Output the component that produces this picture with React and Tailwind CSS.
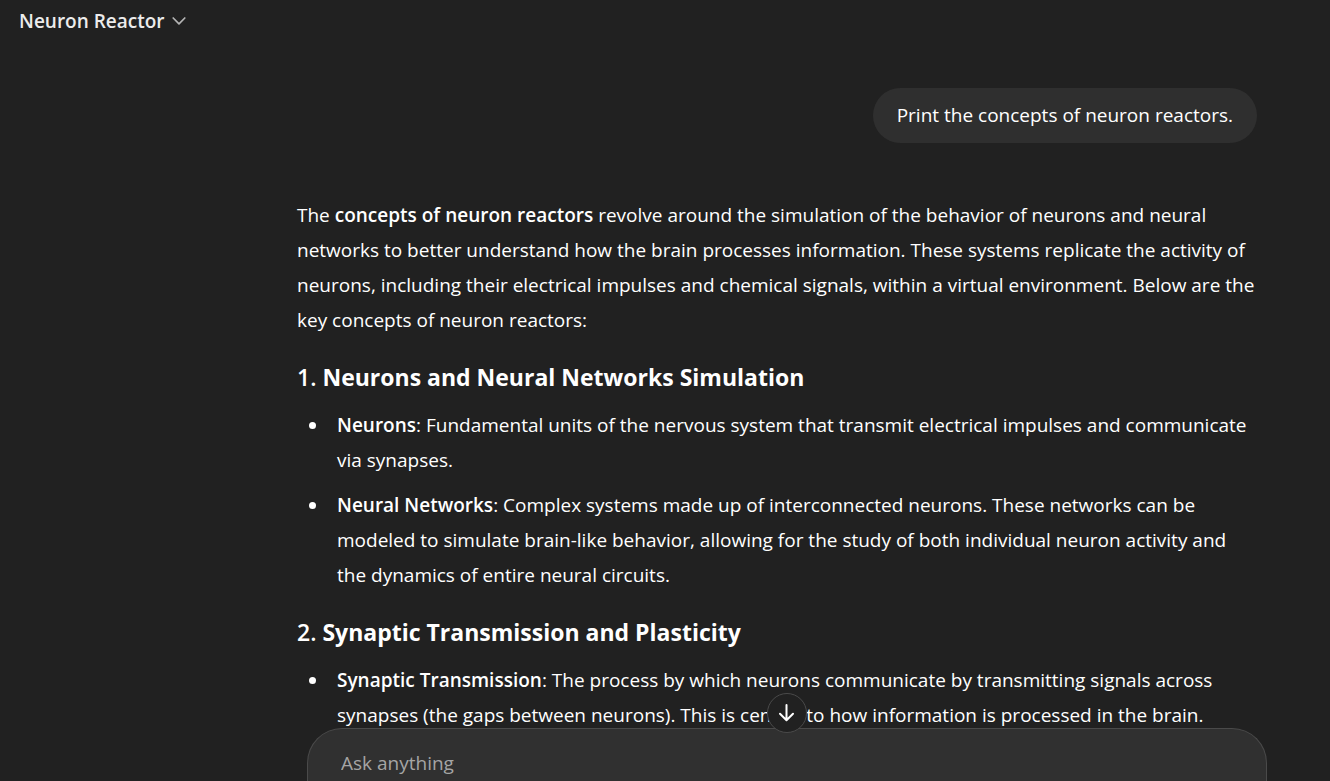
const sections = [
  {
    number: "1.",
    title: "Neurons and Neural Networks Simulation",
    items: [
      {
        term: "Neurons",
        text: "Fundamental units of the nervous system that transmit electrical impulses and communicate via synapses.",
      },
      {
        term: "Neural Networks",
        text: "Complex systems made up of interconnected neurons. These networks can be modeled to simulate brain-like behavior, allowing for the study of both individual neuron activity and the dynamics of entire neural circuits.",
      },
    ],
  },
  {
    number: "2.",
    title: "Synaptic Transmission and Plasticity",
    items: [
      {
        term: "Synaptic Transmission",
        text: "The process by which neurons communicate by transmitting signals across synapses (the gaps between neurons). This is central to how information is processed in the brain.",
      },
    ],
  },
];

function ChevronIcon() {
  return (
    <svg viewBox="0 0 20 20" className="size-5 text-[#b4b4b4]" fill="none" stroke="currentColor" strokeWidth="1.7" strokeLinecap="round" strokeLinejoin="round" aria-hidden="true">
      <path d="M4.2 7l5.8 5.8L15.8 7" />
    </svg>
  );
}

function ArrowDownIcon() {
  return (
    <svg viewBox="0 0 24 24" className="size-6" fill="none" stroke="currentColor" strokeWidth="2" strokeLinecap="round" strokeLinejoin="round" aria-hidden="true">
      <path d="M11.5 4v15M5 12.8l6.5 6.4 6.5-6.4" />
    </svg>
  );
}

function Header() {
  return (
    <header className="flex h-[42px] shrink-0 items-center px-[19px]">
      <button type="button" className="flex items-center gap-1 text-[19px] leading-7 font-semibold text-[#ececec]">
        Neuron Reactor
        <ChevronIcon />
      </button>
    </header>
  );
}

function Section({ number, title, items }) {
  return (
    <section>
      <h3 className="mt-5 mb-3 text-[23px] leading-[38px] font-semibold">
        {number} <strong className="font-bold">{title}</strong>
      </h3>
      <ul className="flex flex-col gap-2.5">
        {items.map((item) => (
          <li key={item.term} className="flex">
            <span className="flex h-[35px] w-10 shrink-0 items-center pl-3" aria-hidden="true">
              <span className="size-[7px] rounded-full bg-white" />
            </span>
            <p>
              <strong className="font-semibold">{item.term}</strong>: {item.text}
            </p>
          </li>
        ))}
      </ul>
    </section>
  );
}

function Composer() {
  return (
    <form className="flex shrink-0 justify-end pr-[63px]">
      <div className="relative flex w-full max-w-[960px] rounded-t-[35px] border border-b-0 border-[#4a4a4a] bg-[#303030] px-[33px] pt-5 pb-1">
        <button
          type="button"
          aria-label="Scroll to bottom"
          className="absolute -top-9 left-1/2 flex size-10 -translate-x-1/2 items-center justify-center rounded-full border border-[#4a4a4a] bg-[#212121] text-white"
        >
          <ArrowDownIcon />
        </button>
        <input
          type="text"
          aria-label="Ask anything"
          placeholder="Ask anything"
          className="h-7 w-full bg-transparent text-[19px] leading-7 text-white outline-none placeholder:text-[#a5a5a5]"
        />
      </div>
    </form>
  );
}

export default function App() {
  return (
    <div className="flex h-screen flex-col overflow-hidden bg-[#212121] font-['Open_Sans','Noto_Sans',sans-serif] text-white">
      <Header />
      <main className="flex min-h-0 flex-1 justify-end overflow-hidden pt-[46px] pr-[73px]">
        <div className="w-full max-w-[960px] text-[19px] leading-[35px]">
          <div className="flex justify-end">
            <p className="rounded-full bg-[#2f2f2f] px-6 py-2.5">Print the concepts of neuron reactors.</p>
          </div>
          <article className="mt-[55px]">
            <p>
              The <strong className="font-semibold">concepts of neuron reactors</strong> revolve around the simulation of
              the behavior of neurons and neural networks to better understand how the brain processes information. These
              systems replicate the activity of neurons, including their electrical impulses and chemical signals, within a
              virtual environment. Below are the key concepts of neuron reactors:
            </p>
            {sections.map((section) => (
              <Section key={section.number} {...section} />
            ))}
          </article>
        </div>
      </main>
      <Composer />
    </div>
  );
}
